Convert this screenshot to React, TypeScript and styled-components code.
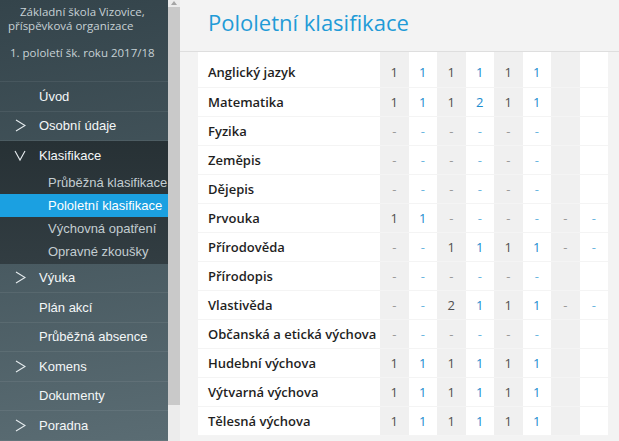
import React from "react";
import styled, { createGlobalStyle } from "styled-components";

type Grade = string | null;

const subjects: { name: string; grades: Grade[] }[] = [
  { name: "Anglický jazyk", grades: ["1", "1", "1", "1", "1", "1", null, null] },
  { name: "Matematika", grades: ["1", "1", "1", "2", "1", "1", null, null] },
  { name: "Fyzika", grades: ["-", "-", "-", "-", "-", "-", null, null] },
  { name: "Zeměpis", grades: ["-", "-", "-", "-", "-", "-", null, null] },
  { name: "Dějepis", grades: ["-", "-", "-", "-", "-", "-", null, null] },
  { name: "Prvouka", grades: ["1", "1", "-", "-", "-", "-", "-", "-"] },
  { name: "Přírodověda", grades: ["-", "-", "1", "1", "1", "1", "-", "-"] },
  { name: "Přírodopis", grades: ["-", "-", "-", "-", "-", "-", null, null] },
  { name: "Vlastivěda", grades: ["-", "-", "2", "1", "1", "1", "-", "-"] },
  { name: "Občanská a etická výchova", grades: ["-", "-", "-", "-", "-", "-", null, null] },
  { name: "Hudební výchova", grades: ["1", "1", "1", "1", "1", "1", null, null] },
  { name: "Výtvarná výchova", grades: ["1", "1", "1", "1", "1", "1", null, null] },
  { name: "Tělesná výchova", grades: ["1", "1", "1", "1", "1", "1", null, null] },
];

const GlobalStyle = createGlobalStyle`
  html, body {
    margin: 0;
    padding: 0;
    height: 100%;
    overflow: hidden;
  }
  #root {
    height: 100%;
  }
`;

const Chevron = ({ down }: { down?: boolean }) => (
  <svg width="12" height="13" viewBox="0 0 12 13">
    {down ? (
      <polyline points="1,2 6,11 11,2" fill="none" stroke="#e6ecef" strokeWidth="1.1" />
    ) : (
      <polyline points="2,1 11,6.5 2,12" fill="none" stroke="#e6ecef" strokeWidth="1.1" />
    )}
  </svg>
);

const App = () => {
  return (
    <Page>
      <GlobalStyle />
      <Sidebar>
        <SchoolInfo>
          <SchoolName>Základní škola Vizovice, příspěvková organizace</SchoolName>
          <Term>1. pololetí šk. roku 2017/18</Term>
        </SchoolInfo>
        <MenuItem>
          <Arrow />
          Úvod
        </MenuItem>
        <MenuItem>
          <Arrow>
            <Chevron />
          </Arrow>
          Osobní údaje
        </MenuItem>
        <Group>
          <MenuItem $plain>
            <Arrow>
              <Chevron down />
            </Arrow>
            Klasifikace
          </MenuItem>
          <SubItem>Průběžná klasifikace</SubItem>
          <SubItem $active>Pololetní klasifikace</SubItem>
          <SubItem>Výchovná opatření</SubItem>
          <SubItem>Opravné zkoušky</SubItem>
        </Group>
        <MenuItem>
          <Arrow>
            <Chevron />
          </Arrow>
          Výuka
        </MenuItem>
        <MenuItem>
          <Arrow />
          Plán akcí
        </MenuItem>
        <MenuItem>
          <Arrow />
          Průběžná absence
        </MenuItem>
        <MenuItem>
          <Arrow>
            <Chevron />
          </Arrow>
          Komens
        </MenuItem>
        <MenuItem>
          <Arrow />
          Dokumenty
        </MenuItem>
        <MenuItem>
          <Arrow>
            <Chevron />
          </Arrow>
          Poradna
        </MenuItem>
      </Sidebar>
      <ScrollTrack>
        <ScrollUp />
        <ScrollThumb />
      </ScrollTrack>
      <Main>
        <Header>
          <Title>Pololetní klasifikace</Title>
        </Header>
        <TableWrap>
          <GradeTable>
            <tbody>
              <SpacerRow>
                <SubjectCell />
                {Array.from({ length: 8 }).map((_, i) => (
                  <GradeCell key={i} $shade={i % 2 === 0} />
                ))}
              </SpacerRow>
              {subjects.map((s) => (
                <Row key={s.name}>
                  <SubjectCell>{s.name}</SubjectCell>
                  {s.grades.map((g, i) => (
                    <GradeCell key={i} $shade={i % 2 === 0} $dash={g === "-"}>
                      {g}
                    </GradeCell>
                  ))}
                </Row>
              ))}
            </tbody>
          </GradeTable>
        </TableWrap>
      </Main>
    </Page>
  );
};

const Page = styled.div`
  display: flex;
  height: 100%;
  overflow: hidden;
`;

const Sidebar = styled.nav`
  width: 168px;
  flex-shrink: 0;
  display: flex;
  flex-direction: column;
  background: linear-gradient(172deg, #34444b 0%, #44555c 45%, #5a6c73 100%);
  font-family: "Liberation Sans", Arial, sans-serif;
`;

const SchoolInfo = styled.div`
  height: 82px;
  box-sizing: border-box;
  padding: 5px 6px 0 8px;
  font-family: "Open Sans", sans-serif;
  font-size: 11.5px;
  color: #c7d1d5;
  border-bottom: 1px solid rgba(255, 255, 255, 0.07);
`;

const SchoolName = styled.div`
  line-height: 14px;
  text-indent: 12px;
`;

const Term = styled.div`
  margin-top: 13px;
  line-height: 14px;
  padding-left: 2px;
`;

const MenuItem = styled.div<{ $plain?: boolean }>`
  height: 29.5px;
  box-sizing: border-box;
  display: flex;
  align-items: center;
  font-size: 13px;
  color: #f4f7f8;
  border-bottom: ${(p) => (p.$plain ? "none" : "1px solid rgba(255, 255, 255, 0.07)")};
`;

const Arrow = styled.span`
  width: 39px;
  padding-left: 14px;
  box-sizing: border-box;
  display: flex;
  align-items: center;
`;

const Group = styled.div`
  background: linear-gradient(180deg, #273135 0%, #323d42 100%);
  padding-bottom: 1px;
`;

const SubItem = styled.div<{ $active?: boolean }>`
  height: 23px;
  display: flex;
  align-items: center;
  padding-left: 48px;
  font-size: 13px;
  color: ${(p) => (p.$active ? "#ffffff" : "#c3cdd1")};
  background: ${(p) => (p.$active ? "#1ba0e1" : "transparent")};
`;

const ScrollTrack = styled.div`
  width: 12px;
  flex-shrink: 0;
  background: #ececec;
  position: relative;
`;

const ScrollUp = styled.div`
  position: absolute;
  top: 1px;
  left: 3px;
  width: 0;
  height: 0;
  border-left: 3px solid transparent;
  border-right: 3px solid transparent;
  border-bottom: 4px solid #a5a5a5;
`;

const ScrollThumb = styled.div`
  margin-top: 7px;
  height: 398px;
  background: #c9c9c9;
`;

const Main = styled.main`
  flex: 1;
  background: #f3f3f3;
  display: flex;
  flex-direction: column;
  font-family: "Open Sans", sans-serif;
`;

const Header = styled.header`
  height: 52px;
  flex-shrink: 0;
  box-sizing: border-box;
  border-bottom: 1px solid #dedede;
  padding: 6px 0 0 28px;
`;

const Title = styled.h1`
  margin: 0;
  font-size: 22px;
  font-weight: 400;
  color: #1f9bd7;
  line-height: 32px;
`;

const TableWrap = styled.div`
  padding-left: 18px;
`;

const GradeTable = styled.table`
  width: 410px;
  border-collapse: collapse;
  table-layout: fixed;
  background: #ffffff;
`;

const Row = styled.tr`
  height: 29px;
  border-bottom: 1px solid #f4f4f4;
`;

const SpacerRow = styled.tr`
  height: 6px;
`;

const SubjectCell = styled.td`
  width: 182px;
  padding: 0 0 0 10px;
  box-sizing: border-box;
  font-size: 13px;
  font-weight: 600;
  color: #1f1f1f;
  white-space: nowrap;
`;

const GradeCell = styled.td<{ $shade?: boolean; $dash?: boolean }>`
  padding: 0;
  text-align: center;
  font-size: 13px;
  background: ${(p) => (p.$shade ? "#f0f0f0" : "#ffffff")};
  color: ${(p) =>
    p.$dash ? (p.$shade ? "#9a9a9a" : "#6bb6df") : p.$shade ? "#505050" : "#1b8ccf"};
`;

export default App;
